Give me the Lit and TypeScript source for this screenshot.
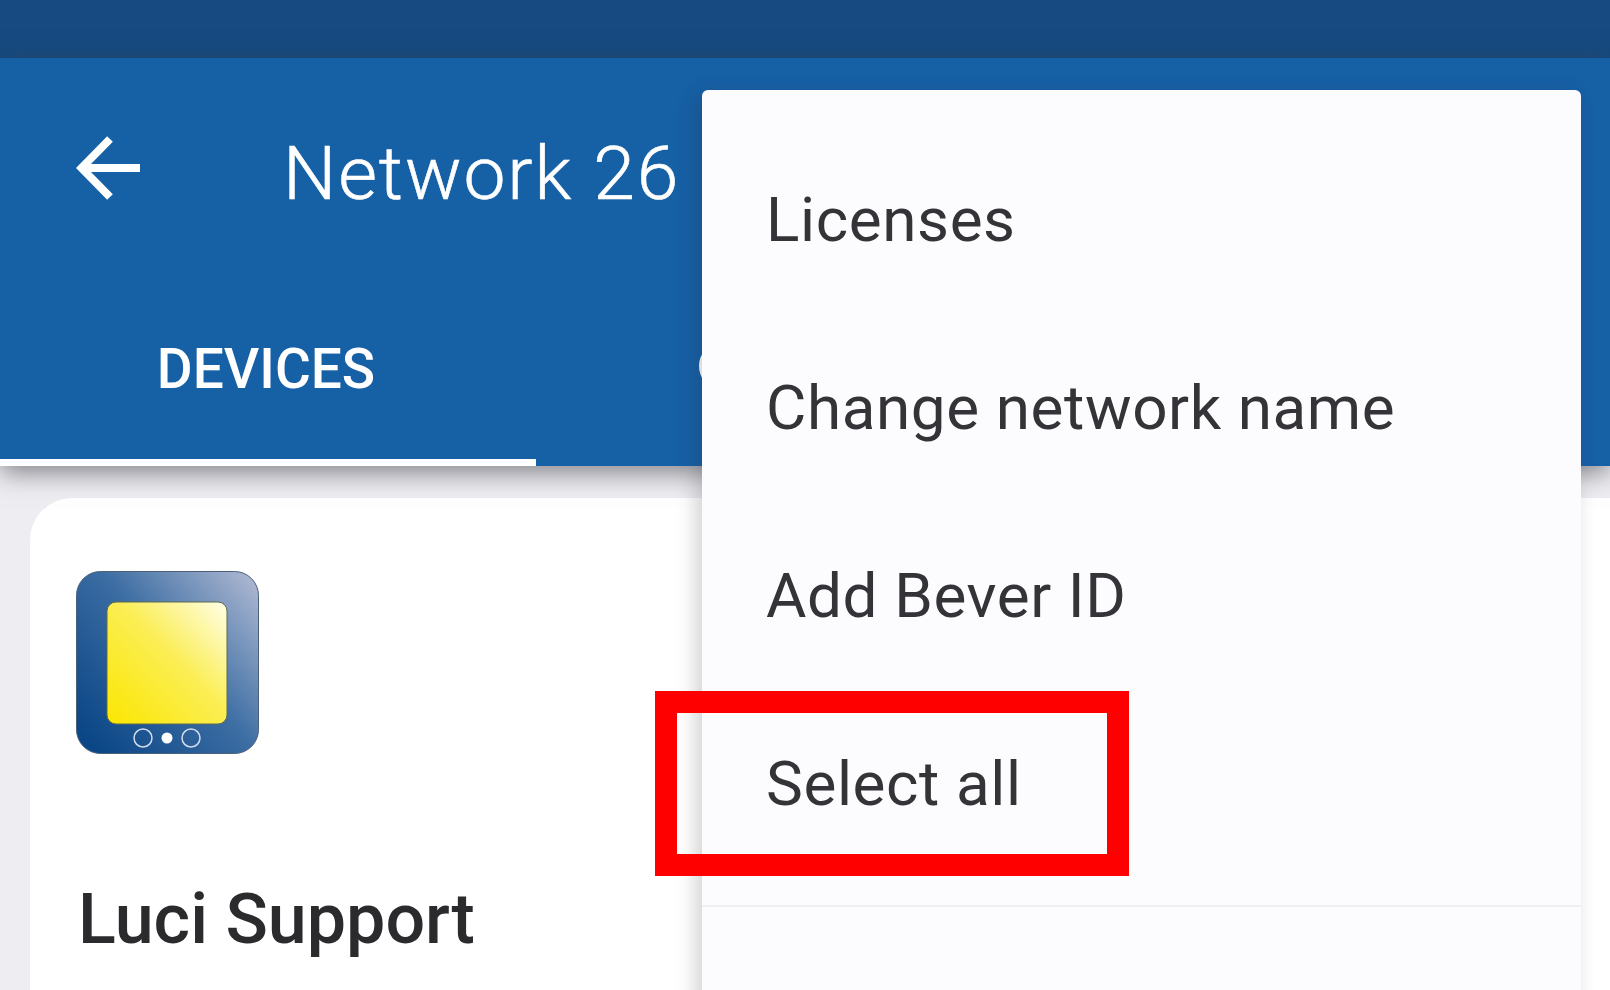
import { LitElement, html, css } from "lit";
import { customElement } from "lit/decorators.js";

@customElement("app-root")
export class AppRoot extends LitElement {
  static styles = css`
    :host {
      display: block;
      position: relative;
      width: 1610px;
      height: 990px;
      overflow: hidden;
      background: #eeeef2;
      font-family: Roboto, "Liberation Sans", sans-serif;
    }

    .status {
      height: 58px;
      background: #164a80;
    }

    .appbar {
      height: 408px;
      background: #1660a6;
      display: flex;
      flex-direction: column;
      box-shadow: 0 7px 24px rgba(60, 60, 70, 0.6);
      position: relative;
    }

    .toolbar {
      display: flex;
      align-items: center;
      height: 222px;
      padding: 0 0 0 76px;
      color: #fff;
    }

    .back {
      width: 64px;
      height: 64px;
      margin-right: 143px;
      flex: none;
      margin-top: -2px;
    }

    .title {
      font-size: 75px;
      font-weight: 300;
      letter-spacing: 1.9px;
      -webkit-text-stroke: 0.6px #fff;
      white-space: nowrap;
      padding-top: 7px;
    }

    .tabs {
      display: flex;
      flex: 1;
    }

    .tab {
      width: 536px;
      height: 186px;
      box-sizing: border-box;
      color: #fff;
      font-size: 55px;
      font-weight: 500;
      display: flex;
      justify-content: center;
      align-items: center;
      padding: 0 4px 1px 0;
      border-bottom: 7px solid #fff;
    }

    .peek {
      width: 24px;
      height: 32px;
      margin: 65px 0 0 163px;
      border: 5px solid #fff;
      border-radius: 50%;
      flex: none;
    }

    .card {
      margin: 32px 0 0 30px;
      height: 520px;
      background: #fff;
      border-radius: 42px 0 0 0;
      padding: 73px 0 0 46px;
    }

    .icon {
      display: block;
      width: 183px;
      height: 183px;
    }

    .name {
      margin-top: 124px;
      margin-left: 2px;
      font-size: 70px;
      line-height: 82px;
      font-weight: 500;
      color: #2b2b2e;
    }

    .menu {
      position: absolute;
      left: 702px;
      top: 90px;
      width: 879px;
      height: 920px;
      background: #fcfcfe;
      border-radius: 6px 6px 0 0;
      box-shadow: -6px 4px 20px rgba(40, 40, 50, 0.22);
      padding-top: 35px;
      box-sizing: border-box;
    }

    .item {
      height: 188px;
      display: flex;
      align-items: center;
      padding-left: 64px;
      font-size: 62px;
      font-weight: 380;
      letter-spacing: 0.6px;
      color: #333338;
    }

    .divider {
      margin-top: 28px;
      height: 2px;
      background: #f0f0f3;
    }

    .highlight {
      position: absolute;
      left: 655px;
      top: 691px;
      width: 474px;
      height: 185px;
      box-sizing: border-box;
      border: 22px solid #ff0000;
    }
  `;

  render() {
    return html`
      <div class="status"></div>
      <div class="appbar">
        <div class="toolbar">
          <svg class="back" viewBox="0 0 64 64" fill="none" stroke="#fff" stroke-width="8">
            <path d="M64 32H6M34 3 5.500 32l28.500 29" />
          </svg>
          <span class="title">Network 26</span>
        </div>
        <div class="tabs">
          <div class="tab">DEVICES</div>
          <div class="peek"></div>
        </div>
      </div>
      <div class="card">
        <svg class="icon" viewBox="0 0 183 183">
          <defs>
            <linearGradient id="frame" x1="0" y1="0.85" x2="1" y2="0">
              <stop offset="0" stop-color="#0b4686" />
              <stop offset="0.5" stop-color="#3c6da3" />
              <stop offset="1" stop-color="#b4bcd4" />
            </linearGradient>
            <linearGradient id="screen" x1="0" y1="1" x2="1" y2="0">
              <stop offset="0" stop-color="#fbe600" />
              <stop offset="0.55" stop-color="#fbee55" />
              <stop offset="1" stop-color="#fffee8" />
            </linearGradient>
          </defs>
          <rect x="0.500" y="0.500" width="182" height="182" rx="24" fill="url(#frame)" stroke="#4a5f78" />
          <rect x="31" y="31" width="120" height="122" rx="9" fill="url(#screen)" stroke="#5c6a50" />
          <circle cx="67" cy="167" r="9" fill="none" stroke="#d3dcec" stroke-width="1.500" />
          <circle cx="91" cy="167" r="5.500" fill="#fff" />
          <circle cx="115" cy="167" r="9" fill="none" stroke="#d3dcec" stroke-width="1.500" />
        </svg>
        <div class="name">Luci Support</div>
      </div>
      <div class="menu">
        <div class="item">Licenses</div>
        <div class="item">Change network name</div>
        <div class="item">Add Bever ID</div>
        <div class="item">Select all</div>
        <div class="divider"></div>
      </div>
      <div class="highlight"></div>
    `;
  }
}
